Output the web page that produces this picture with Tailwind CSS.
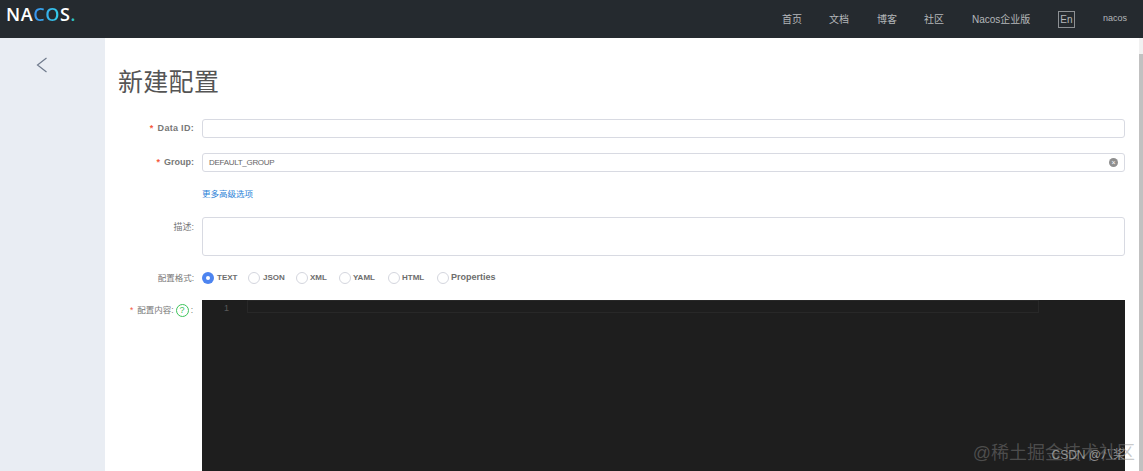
<!DOCTYPE html>
<html lang="zh-CN">
<head>
  <meta charset="UTF-8" />
  <title>新建配置</title>
  <script src="https://cdn.jsdelivr.net/npm/@tailwindcss/browser@4"></script>
</head>
<body class="h-[471px] overflow-hidden bg-white font-['Liberation_Sans','Noto_Sans_CJK_SC',sans-serif] text-[#666]">
  <!-- top nav -->
  <header class="h-[38px] bg-[#252a2f] flex items-center text-[10px] text-[#b4b7ba]">
    <div class="ml-[6px] mb-[10px] text-[18px] leading-none font-semibold font-['Open_Sans',sans-serif] tracking-[0.6px] text-white">NA<span class="bg-gradient-to-r from-[#3a8ff0] to-[#35d0e8] bg-clip-text text-transparent">CO</span>S<span class="text-[#2fc4c4]">.</span></div>
    <nav class="ml-auto flex items-center">
      <a class="w-[20px] mr-[27px]">首页</a>
      <a class="w-[20px] mr-[28px]">文档</a>
      <a class="w-[20px] mr-[27px]">博客</a>
      <a class="w-[20px] mr-[28px]">社区</a>
      <a class="w-[59px] mr-[27px]">Nacos企业版</a>
      <span class="w-[17px] h-[17px] mr-[28px] border border-[#8d9094] flex items-center justify-center">En</span>
      <a class="mr-[16px] text-[9px]">nacos</a>
    </nav>
  </header>

  <div class="flex h-[433px]">
    <!-- sidebar -->
    <aside class="w-[105px] shrink-0 bg-[#e9edf3] flex justify-center pt-[19px] pr-[21px]">
      <svg width="12" height="16" viewBox="0 0 12 16" fill="none" stroke="#6f7a8c" stroke-width="1.2"><path d="M10.5 1 L1.5 8 L10.5 15" /></svg>
    </aside>

    <main class="flex-1 min-w-0 relative pl-[13px] pr-[18px]">
      <h1 class="mt-[26px] h-[36px] text-[25px] tracking-[0.3px] leading-[36px] font-normal text-[#555]">新建配置</h1>

      <form class="mt-[19px] text-[9px]">
        <div class="flex items-center h-[19px]">
          <label class="w-[77px] pr-[1px] text-right font-bold text-[#777] tracking-[0.3px]"><span class="text-[#f5593d] mr-[4px]">*</span>Data ID:</label>
          <input class="ml-[7px] flex-1 h-[19px] bg-white border border-[#d8dae2] rounded-[3px]" />
        </div>

        <div class="flex items-center h-[19px] mt-[15px]">
          <label class="w-[77px] pr-[1px] text-right font-bold text-[#777]"><span class="text-[#f5593d] mr-[4px]">*</span>Group:</label>
          <div class="ml-[7px] flex-1 h-[19px] border border-[#d8dae2] rounded-[3px] flex items-center justify-between pl-[6px] pr-[6px] text-[#666]">
            <span class="text-[8px] tracking-[-0.3px]">DEFAULT_GROUP</span>
            <span class="w-[9px] h-[9px] rounded-full bg-[#8f8f8f] text-white text-[7px] leading-[9px] text-center">×</span>
          </div>
        </div>

        <a class="block ml-[84px] mt-[16px] h-[12px] leading-[12px] text-[8.5px] text-[#2d83d8]">更多高级选项</a>

        <div class="flex mt-[17px]">
          <label class="w-[77px] pr-[1px] text-right text-[#777] pt-[4px]">描述:</label>
          <div class="ml-[7px] flex-1 h-[39px] border border-[#d8dae2] rounded-[3px]"></div>
        </div>

        <div class="flex items-center h-[14px] mt-[15px]">
          <label class="w-[77px] pr-[1px] text-right text-[8.5px] text-[#777]">配置格式:</label>
          <div class="ml-[7px] flex items-center font-bold text-[#6d6d6d]">
            <span class="w-[12px] h-[12px] rounded-full bg-[#4d84f0] flex items-center justify-center"><span class="w-[4px] h-[4px] rounded-full bg-white"></span></span>
            <span class="ml-[3px] mr-[11px] w-[20px] text-[8px]">TEXT</span>
            <span class="w-[12px] h-[12px] rounded-full border border-[#d4d6de]"></span>
            <span class="ml-[3px] mr-[11px] w-[22px] text-[8px]">JSON</span>
            <span class="w-[12px] h-[12px] rounded-full border border-[#d4d6de]"></span>
            <span class="ml-[2px] mr-[11px] w-[18px] text-[8px]">XML</span>
            <span class="w-[12px] h-[12px] rounded-full border border-[#d4d6de]"></span>
            <span class="ml-[2px] mr-[11px] w-[24px] text-[8px]">YAML</span>
            <span class="w-[12px] h-[12px] rounded-full border border-[#d4d6de]"></span>
            <span class="ml-[2px] mr-[11px] w-[24px] text-[8px]">HTML</span>
            <span class="w-[12px] h-[12px] rounded-full border border-[#d4d6de]"></span>
            <span class="ml-[2px]">Properties</span>
          </div>
        </div>

        <div class="flex mt-[15px]">
          <label class="w-[77px] pr-[2px] text-right text-[8.5px] text-[#777] whitespace-nowrap flex justify-end items-center h-[13px] mt-[4px]"><span class="text-[#f5593d] mr-[4px]">*</span>配置内容:<span class="mx-[2px] w-[13px] h-[13px] rounded-full border-[1.5px] border-[#3cc35a] text-[#3cc35a] text-[9px] leading-[10px] text-center">?</span>:</label>
          <div class="ml-[7px] flex-1 h-[171px] bg-[#1e1e1e] flex items-start">
            <span class="w-[45px] pr-[18px] pt-[2px] text-right text-[#5a5a5a]">1</span>
            <div class="flex-1 mr-[86px] h-[13px] border border-[#282828]"></div>
          </div>
        </div>
      </form>

      <!-- scrollbar -->
      <div class="absolute right-0 top-0 bottom-0 w-[4px] bg-[#f1f1f1]">
        <div class="mt-[16px] h-full bg-[#c1c1c1]"></div>
      </div>

      <!-- watermarks -->
      <span class="absolute right-[8px] bottom-[9px] text-[18px] leading-none text-[#888]/45 whitespace-nowrap">@稀土掘金技术社区</span>
      <span class="absolute right-[18px] bottom-[10px] text-[12px] leading-none text-[#ccc]/65 whitespace-nowrap">CSDN @八桨</span>
    </main>
  </div>
</body>
</html>
